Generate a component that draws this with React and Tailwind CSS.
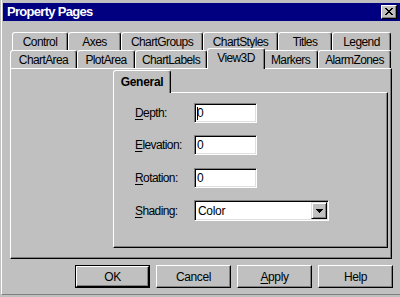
import React from 'react';

const font = "font-['Liberation_Sans',Arial,sans-serif]";

const Tab = ({ label, w }) => (
  <div
    className={`flex items-center justify-center h-[18px] shrink-0 border-l border-t border-r border-l-white border-t-white border-r-black rounded-t-[3px] shadow-[inset_-1px_0_0_#808080] text-[12px] tracking-[-0.6px] text-black ${w}`}
  >
    {label}
  </div>
);

const Field = ({ label, value, caret }) => (
  <div className="flex items-center">
    <div className="w-[59px] text-[12px] tracking-[-0.6px] text-black">
      <span className="underline underline-offset-2">{label[0]}</span>
      {label.slice(1)}
    </div>
    <div className="flex items-center w-[63px] h-[20px] bg-white border border-t-[#808080] border-l-[#808080] border-b-white border-r-white shadow-[inset_1px_1px_0_#000,inset_-1px_-1px_0_#dfdfdf] pl-[2px] text-[12px] text-black">
      {caret && <span className="w-px h-[13px] bg-black -mr-px" />}
      <span>{value}</span>
    </div>
  </div>
);

const Button = ({ children, isDefault }) => (
  <div
    className={`flex items-center justify-center w-[75px] h-[23px] text-[12px] tracking-[-0.4px] text-black ${
      isDefault ? 'border border-black' : ''
    }`}
  >
    <div className="flex items-center justify-center w-full h-full border border-t-white border-l-white border-r-black border-b-black shadow-[inset_-1px_-1px_0_#808080]">
      {children}
    </div>
  </div>
);

export default function App() {
  return (
    <div className={`w-[400px] h-[297px] bg-[#c0c0c0] pl-px overflow-hidden ${font}`}>
      <div className="h-[295px] border-l border-b border-l-white border-b-[#808080] pl-px pt-[3px]">
        {/* title bar */}
        <div className="flex items-center justify-between h-[18px] bg-[#000080] pl-[4px] pr-[3px]">
          <span className="text-white font-bold text-[13px] tracking-[-0.7px]">Property Pages</span>
          <div className="flex items-center justify-center w-[16px] h-[14px] bg-[#c0c0c0] border border-t-white border-l-white border-r-black border-b-black shadow-[inset_-1px_-1px_0_#808080]">
            <svg width="8" height="7" viewBox="0 0 8 7" shapeRendering="crispEdges" className="-mt-px">
              <path
                fill="#000"
                d="M0 0h2v1H0zM6 0h2v1H6zM1 1h2v1H1zM5 1h2v1H5zM2 2h4v1H2zM3 3h2v1H3zM2 4h4v1H2zM1 5h2v1H1zM5 5h2v1H5zM0 6h2v1H0zM6 6h2v1H6z"
              />
            </svg>
          </div>
        </div>

        {/* tab rows */}
        <div className="flex h-[18px] mt-[11px] ml-[9px]">
          <Tab label="Control" w="w-[56px]" />
          <Tab label="Axes" w="w-[53px]" />
          <Tab label="ChartGroups" w="w-[82px]" />
          <Tab label="ChartStyles" w="w-[75px]" />
          <Tab label="Titles" w="w-[54px]" />
          <Tab label="Legend" w="w-[59px]" />
        </div>
        <div className="flex items-start h-[18px] ml-[7px]">
          <Tab label="ChartArea" w="w-[67px]" />
          <Tab label="PlotArea" w="w-[58px]" />
          <Tab label="ChartLabels" w="w-[72px]" />
          <div className="relative z-10 flex items-center justify-center w-[58px] -mr-[2px] h-[21px] -mt-[2px] pb-[2px] shrink-0 bg-[#c0c0c0] border-l border-t border-r border-l-white border-t-white border-r-black rounded-t-[3px] shadow-[inset_-1px_0_0_#808080] text-[12px] tracking-[-0.6px] text-black">
            View3D
          </div>
          <Tab label="Markers" w="w-[55px]" />
          <Tab label="AlarmZones" w="w-[73px]" />
        </div>

        {/* main panel */}
        <div className="ml-[7px] w-[382px] h-[191px] border border-t-white border-l-white border-r-black border-b-black shadow-[inset_-1px_-1px_0_#808080] pl-[102px] pt-px">
          <div className="flex flex-col w-[275px]">
            <div className="flex items-start h-[22px]">
              <div className="relative z-10 flex items-center justify-center w-[58px] h-[23px] bg-[#c0c0c0] border-l border-t border-r border-l-white border-t-white border-r-black rounded-t-[3px] shadow-[inset_-1px_0_0_#808080] text-[12px] font-bold tracking-[-0.3px] text-black">
                General
              </div>
            </div>
            <div className="h-[156px] border border-t-white border-l-white border-r-black border-b-black shadow-[inset_-1px_-1px_0_#808080] pl-[21px] pt-[10px]">
              <Field label="Depth:" value="0" caret />
              <div className="mt-[12px]">
                <Field label="Elevation:" value="0" />
              </div>
              <div className="mt-[13px]">
                <Field label="Rotation:" value="0" />
              </div>
              <div className="flex items-center mt-[12px]">
                <div className="w-[59px] text-[12px] tracking-[-0.6px] text-black">
                  <span className="underline underline-offset-2">S</span>hading:
                </div>
                <div className="flex items-center justify-between w-[135px] h-[21px] bg-white border border-t-[#808080] border-l-[#808080] border-b-white border-r-white shadow-[inset_1px_1px_0_#000,inset_-1px_-1px_0_#dfdfdf] pl-[3px] pr-px text-[12px] tracking-[-0.3px] text-black">
                  <span>Color</span>
                  <div className="flex items-center justify-center w-[16px] h-[17px] bg-[#c0c0c0] border border-t-[#dfdfdf] border-l-[#dfdfdf] border-r-black border-b-black shadow-[inset_1px_1px_0_#fff,inset_-1px_-1px_0_#808080]">
                    <svg width="7" height="4" viewBox="0 0 7 4" shapeRendering="crispEdges">
                      <path fill="#000" d="M0 0h7v1H0zM1 1h5v1H1zM2 2h3v1H2zM3 3h1v1H3z" />
                    </svg>
                  </div>
                </div>
              </div>
            </div>
          </div>
        </div>

        {/* buttons */}
        <div className="flex gap-[6px] mt-[6px] ml-[72px]">
          <Button isDefault>OK</Button>
          <Button>Cancel</Button>
          <Button>
            <span>
              <span className="underline underline-offset-2">A</span>pply
            </span>
          </Button>
          <Button>Help</Button>
        </div>
      </div>
    </div>
  );
}
